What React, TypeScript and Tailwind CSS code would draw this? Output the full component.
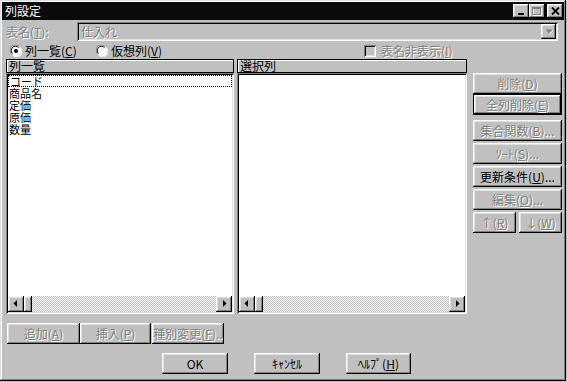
import type { ReactNode } from "react";

const raised =
  "shadow-[inset_-1px_-1px_0_#000,inset_1px_1px_0_#fff,inset_-2px_-2px_0_#808080,inset_2px_2px_0_#dfdfdf]";
const sunken =
  "shadow-[inset_1px_1px_0_#808080,inset_-1px_-1px_0_#fff,inset_2px_2px_0_#000,inset_-2px_-2px_0_#dfdfdf]";
const dim = "text-[#808080] [text-shadow:1px_1px_0_#fff]";

function Btn({
  children,
  disabled,
  isDefault,
  className,
}: {
  children: ReactNode;
  disabled?: boolean;
  isDefault?: boolean;
  className?: string;
}) {
  return (
    <div
      className={`flex h-[21px] shrink-0 ${isDefault ? "border border-black" : ""} ${className ?? ""}`}
    >
      <div
        className={`flex h-full w-full items-center justify-center whitespace-nowrap text-[12px] leading-[12px] ${raised} ${
          disabled ? dim : "text-black"
        }`}
      >
        {children}
      </div>
    </div>
  );
}

function Arrow({ dir }: { dir: "left" | "right" }) {
  return (
    <div className={`flex h-[16px] w-[16px] shrink-0 items-center justify-center bg-[#c0c0c0] ${raised}`}>
      <svg width="16" height="16" viewBox="0 0 16 16">
        {dir === "left" ? (
          <polygon points="9,4 9,11 5.5,7.5" fill="#000" />
        ) : (
          <polygon points="7,4 7,11 10.5,7.5" fill="#000" />
        )}
      </svg>
    </div>
  );
}

function HScroll() {
  return (
    <div className="flex h-[16px]">
      <Arrow dir="left" />
      <div className={`h-full w-[8px] shrink-0 bg-[#c0c0c0] ${raised}`} />
      <div className="flex-1 bg-[repeating-conic-gradient(#c0c0c0_0%_25%,#fff_0%_50%)] bg-[length:2px_2px]" />
      <Arrow dir="right" />
    </div>
  );
}

function ListPanel({ title, items }: { title: string; items: string[] }) {
  return (
    <div className="flex h-full flex-col">
      <div className="flex h-[14px] items-center border border-black bg-[#c0c0c0] pl-[2px] text-[12px] leading-[12px] text-black shadow-[inset_1px_1px_0_#fff]">
        {title}
      </div>
      <div className={`flex flex-1 flex-col bg-white p-[2px] ${sunken}`}>
        <div className="flex-1 text-[11px] text-black">
          {items.map((it, i) => (
            <div
              key={it}
              className={`h-[12px] overflow-visible pl-[1px] ${
                i === 0 ? "border border-dotted border-black leading-[10px]" : "leading-[12px]"
              }`}
            >
              {it}
            </div>
          ))}
        </div>
        <HScroll />
      </div>
    </div>
  );
}

function TitleBtn({ children }: { children: ReactNode }) {
  return (
    <div className={`flex h-[14px] w-[16px] items-center justify-center bg-[#c0c0c0] ${raised}`}>
      {children}
    </div>
  );
}

export default function App() {
  return (
    <div className="h-[382px] w-[567px] overflow-hidden bg-[#c0c0c0] font-['Noto_Sans_CJK_JP','Noto_Sans',sans-serif]">
      <div
        className={`flex h-[381px] w-[566px] flex-col p-[2px] shadow-[inset_-1px_-1px_0_#000,inset_1px_1px_0_#dfdfdf,inset_-2px_-2px_0_#808080,inset_2px_2px_0_#fff]`}
      >
        {/* title bar */}
        <div className="flex h-[18px] items-center bg-[#0a0a0a] pl-[3px] pr-[1px]">
          <span className="text-[12px] leading-[12px] text-white">列設定</span>
          <div className="ml-auto flex items-center">
            <TitleBtn>
              <svg width="8" height="8" viewBox="0 0 8 8">
                <rect x="1" y="6" width="6" height="2" fill="#000" />
              </svg>
            </TitleBtn>
            <TitleBtn>
              <svg width="10" height="9" viewBox="0 0 10 9">
                <rect x="1.5" y="1.5" width="8" height="7" fill="none" stroke="#fff" />
                <rect x="0.5" y="0.5" width="8" height="7" fill="none" stroke="#808080" />
                <rect x="0.5" y="1" width="8" height="1" fill="#808080" />
              </svg>
            </TitleBtn>
            <div className="ml-[2px]">
              <TitleBtn>
                <svg width="9" height="8" viewBox="0 0 9 8">
                  <path d="M1 0.5 L8 7.5 M8 0.5 L1 7.5" stroke="#000" strokeWidth="1.8" />
                </svg>
              </TitleBtn>
            </div>
          </div>
        </div>

        <div className="flex flex-1 flex-col pl-[4px] pr-[2px]">
          {/* table name row */}
          <div className="mt-[2px] flex h-[19px] items-center">
            <span className={`w-[71px] text-[12px] leading-[12px] ${dim}`}>
              表名(<u>T</u>):
            </span>
            <div className={`flex h-full w-[481px] items-center bg-[#c0c0c0] pl-[4px] pr-[2px] ${sunken}`}>
              <span className={`text-[12px] leading-[12px] ${dim}`}>仕入れ</span>
              <div className={`ml-auto flex h-[15px] w-[15px] items-center justify-center bg-[#c0c0c0] ${raised}`}>
                <svg width="8" height="5" viewBox="0 0 8 5">
                  <polygon points="0.5,0.5 7.5,0.5 4,4.5" fill="#808080" />
                  <polygon points="4.5,4.5 8,1 8,2 5,5" fill="#fff" />
                </svg>
              </div>
            </div>
          </div>

          {/* radio row */}
          <div className="mt-[1px] flex h-[17px] items-center text-[12px] leading-[12px]">
            <div className="ml-[4px] flex w-[86px] items-center gap-[3px] text-black">
              <svg width="12" height="12" viewBox="0 0 12 12">
                <circle cx="6" cy="6" r="5.5" fill="#fff" />
                <path d="M1.5 9 A5 5 0 0 1 9 1.5" stroke="#808080" strokeWidth="1" fill="none" />
                <path d="M2.5 8.5 A4 4 0 0 1 8.5 2.5" stroke="#000" strokeWidth="1" fill="none" />
                <path d="M10.5 3 A5 5 0 0 1 3 10.5" stroke="#fff" strokeWidth="1" fill="none" />
                <circle cx="6" cy="6" r="2" fill="#000" />
              </svg>
              <span>
                列一覧(<u>C</u>)
              </span>
            </div>
            <div className="flex w-[268px] items-center gap-[3px] text-black">
              <svg width="12" height="12" viewBox="0 0 12 12">
                <circle cx="6" cy="6" r="5.5" fill="#fff" />
                <path d="M1.5 9 A5 5 0 0 1 9 1.5" stroke="#808080" strokeWidth="1" fill="none" />
                <path d="M2.5 8.5 A4 4 0 0 1 8.5 2.5" stroke="#000" strokeWidth="1" fill="none" />
                <path d="M10.5 3 A5 5 0 0 1 3 10.5" stroke="#fff" strokeWidth="1" fill="none" />
              </svg>
              <span>
                仮想列(<u>V</u>)
              </span>
            </div>
            <div className="flex items-center gap-[5px]">
              <div className={`h-[12px] w-[12px] bg-[#c0c0c0] ${sunken}`} />
              <span className={dim}>
                表名非表示(<u>I</u>)
              </span>
            </div>
          </div>

          {/* lists + buttons */}
          <div className="flex h-[255px]">
            <div className="w-[228px]">
              <ListPanel title="列一覧" items={["コード", "商品名", "定価", "原価", "数量"]} />
            </div>
            <div className="w-[3px]" />
            <div className="w-[230px]">
              <ListPanel title="選択列" items={[]} />
            </div>
            <div className="ml-[6px] flex w-[89px] flex-col pt-[14px]">
              <Btn disabled>
                削除(<u>D</u>)
              </Btn>
              <Btn disabled isDefault>
                全列削除(<u>E</u>)
              </Btn>
              <Btn disabled className="mt-[5px]">
                集合関数(<u>B</u>)...
              </Btn>
              <Btn disabled className="mt-[2px]">
                ｿｰﾄ(<u>S</u>)...
              </Btn>
              <Btn className="mt-[2px]">
                更新条件(<u>U</u>)...
              </Btn>
              <Btn disabled className="mt-[2px]">
                編集(<u>O</u>)...
              </Btn>
              <div className="mt-[2px] flex gap-[3px]">
                <Btn disabled className="w-[43px]">
                  ↑(<u>R</u>)
                </Btn>
                <Btn disabled className="w-[43px]">
                  ↓(<u>W</u>)
                </Btn>
              </div>
            </div>
          </div>

          {/* add/insert row */}
          <div className="mt-[9px] flex">
            <Btn disabled className="ml-[1px] w-[73px]">
              追加(<u>A</u>)
            </Btn>
            <Btn disabled className="w-[71px]">
              挿入(<u>P</u>)
            </Btn>
            <Btn disabled className="ml-[1px] w-[72px]">
              種別変更(<u>F</u>)..
            </Btn>
          </div>

          {/* dialog buttons */}
          <div className="mt-[9px] flex pl-[156px]">
            <Btn className="w-[66px]">OK</Btn>
            <Btn className="ml-[26px] w-[66px]">ｷｬﾝｾﾙ</Btn>
            <Btn className="ml-[26px] w-[65px]">
              ﾍﾙﾌﾟ(<u>H</u>)
            </Btn>
          </div>
        </div>
      </div>
    </div>
  );
}
